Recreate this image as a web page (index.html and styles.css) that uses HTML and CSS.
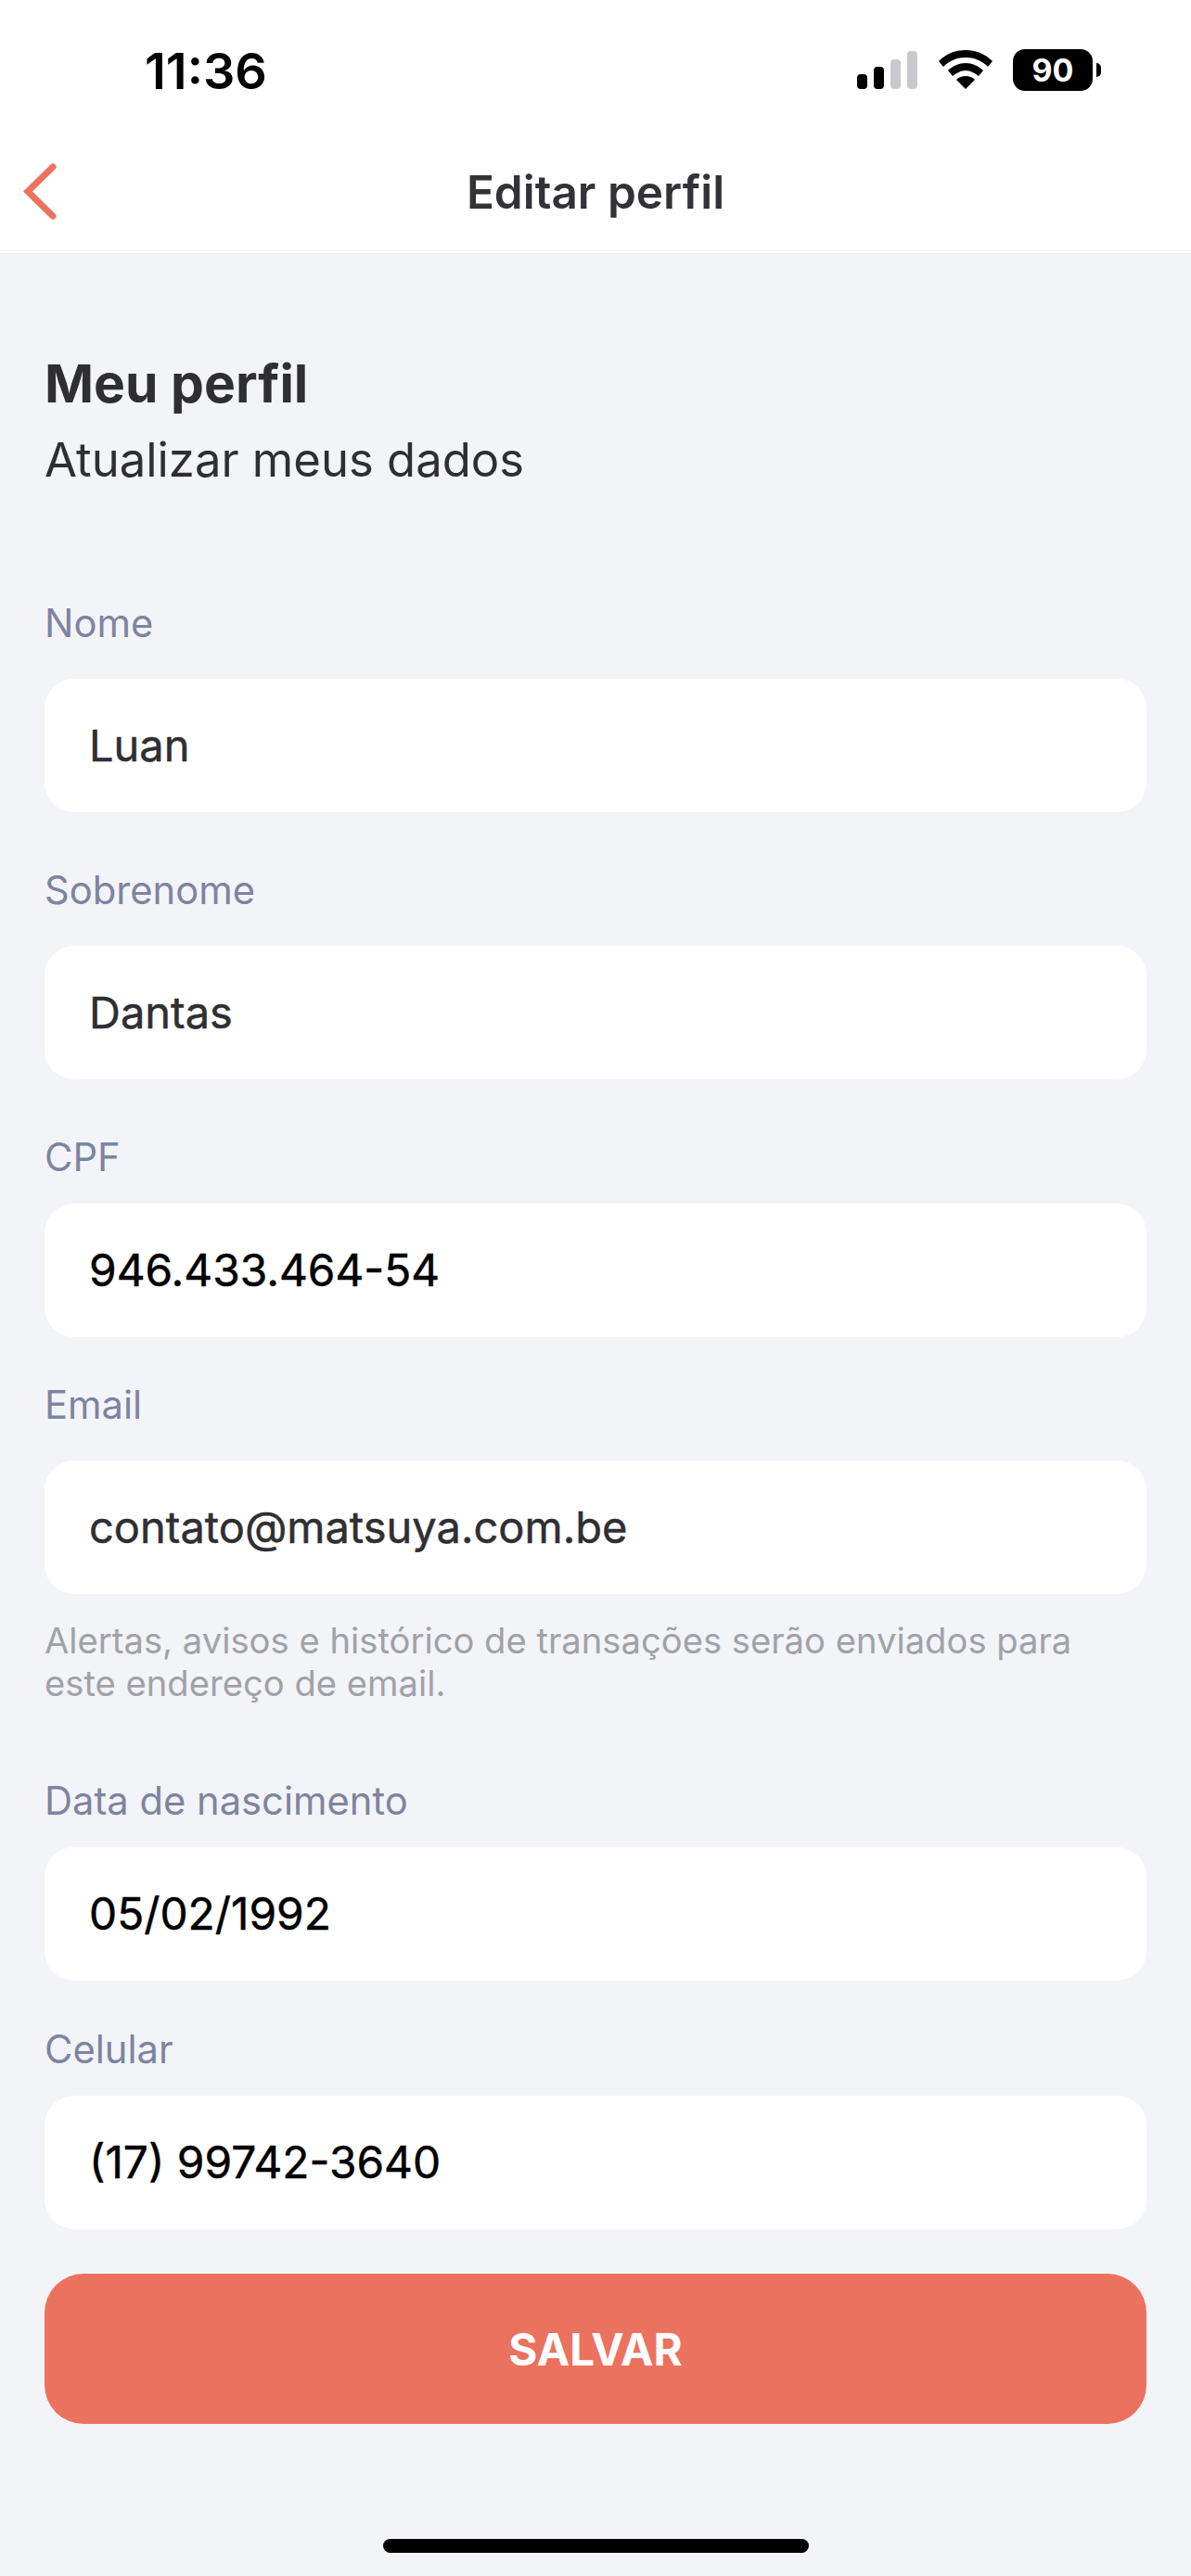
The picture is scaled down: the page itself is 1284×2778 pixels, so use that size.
FILE: index.html
```html
<!DOCTYPE html>
<html lang="pt-BR">
<head>
<meta charset="utf-8">
<title>Editar perfil</title>
<link rel="stylesheet" href="styles.css">
</head>
<body>
<header class="top">
  <div class="status">
    <span class="time">11:36</span>
    <div class="status-icons">
      <svg class="signal" width="66" height="42" viewBox="0 0 66 42">
        <rect x="0" y="25" width="11" height="16" rx="4" fill="#000"/>
        <rect x="18" y="17" width="11" height="24" rx="4" fill="#000"/>
        <rect x="36" y="9" width="11" height="32" rx="4" fill="#c9c8cd"/>
        <rect x="54" y="0" width="11" height="41" rx="4" fill="#c9c8cd"/>
      </svg>
      <svg class="wifi" width="58" height="42" viewBox="0 0 58 42">
        <path d="M29 0C18 0 8 4 0 12l5 6C12 11 20 8 29 8s17 3 24 10l5-6C50 4 40 0 29 0z" fill="#000"/>
        <path d="M29 14c-7 0-14 3-19 8l5 6c4-3 9-6 14-6s10 3 14 6l5-6c-5-5-12-8-19-8z" fill="#000"/>
        <path d="M29 28c-4 0-7 1-10 4l10 10 10-10c-3-3-6-4-10-4z" fill="#000"/>
      </svg>
      <div class="battery"><span class="battery-body">90</span><span class="battery-cap"></span></div>
    </div>
  </div>
  <div class="nav">
    <svg class="back" width="40" height="64" viewBox="0 0 40 64">
      <path d="M33 6 L6 32.5 L33 59" fill="none" stroke="#ec7260" stroke-width="7" stroke-linecap="round" stroke-linejoin="miter"/>
    </svg>
    <h1 class="nav-title">Editar perfil</h1>
  </div>
</header>
<main class="content">
  <h2 class="heading">Meu perfil</h2>
  <p class="subheading">Atualizar meus dados</p>
  <form class="form">
    <div class="field field-nome">
      <label class="label">Nome</label>
      <div class="input">Luan</div>
    </div>
    <div class="field field-sobrenome">
      <label class="label">Sobrenome</label>
      <div class="input">Dantas</div>
    </div>
    <div class="field field-cpf">
      <label class="label label-close">CPF</label>
      <div class="input input-filled">946.433.464-54</div>
    </div>
    <div class="field field-email">
      <label class="label">Email</label>
      <div class="input">contato@matsuya.com.be</div>
      <p class="hint">Alertas, avisos e histórico de transações serão enviados para este endereço de email.</p>
    </div>
    <div class="field field-data">
      <label class="label label-close">Data de nascimento</label>
      <div class="input input-filled">05/02/1992</div>
    </div>
    <div class="field field-celular">
      <label class="label label-close">Celular</label>
      <div class="input input-filled">(17) 99742-3640</div>
    </div>
    <button class="save" type="button">SALVAR</button>
  </form>
  <div class="home-bar"></div>
</main>
</body>
</html>
```
FILE: styles.css
```css
* { box-sizing: border-box; }
html, body { margin: 0; padding: 0; }
body {
  width: 1284px;
  height: 2778px;
  background: linear-gradient(#f2f4f6 274px, #f3f4f8 800px);
  font-family: Inter, "Noto Sans", sans-serif;
  color: #2f2f33;
  overflow: hidden;
}
.top {
  height: 274px;
  background: #fff;
  border-bottom: 1px solid #e9eaed;
}
.status {
  height: 130px;
  display: flex;
  justify-content: space-between;
  align-items: flex-start;
  padding: 48px 97px 0 156px;
}
.time {
  font-size: 54px;
  line-height: 54px;
  font-weight: 600;
  color: #000;
  position: relative;
  top: 2px;
}
.status-icons {
  display: flex;
  align-items: flex-start;
  gap: 22px;
  padding-top: 5px;
}
.signal { margin-top: 2px; }
.wifi { margin-top: 1px; }
.battery {
  display: flex;
  align-items: center;
  gap: 4px;
}
.battery-body {
  width: 86px;
  height: 45px;
  background: #000;
  border-radius: 13px;
  color: #fff;
  font-size: 34px;
  line-height: 45px;
  font-weight: 700;
  text-align: center;
}
.battery-cap {
  width: 5px;
  height: 15px;
  background: #000;
  border-radius: 0 8px 8px 0;
}
.nav {
  height: 143px;
  position: relative;
  display: flex;
  align-items: center;
  justify-content: center;
}
.back {
  position: absolute;
  left: 24px;
  top: 44px;
}
.nav-title {
  margin: 0;
  font-size: 49.5px;
  line-height: 60px;
  font-weight: 600;
  color: #333337;
  position: relative;
  top: 5px;
}
.content { padding: 0 48px; }
.heading {
  margin: 106px 0 0;
  font-size: 57px;
  line-height: 68px;
  font-weight: 700;
  color: #2f2f33;
}
.subheading {
  margin: 18px 0 0;
  font-size: 50.8px;
  line-height: 60px;
  font-weight: 400;
  color: #2f2f33;
}
.form { display: flex; flex-direction: column; }
.field { display: flex; flex-direction: column; }
.field-nome { margin-top: 121px; }
.field-sobrenome { margin-top: 59px; }
.field-cpf { margin-top: 59px; }
.field-email { margin-top: 48px; }
.field-data { margin-top: 79px; }
.field-celular { margin-top: 49px; }
.label {
  font-size: 41.7px;
  line-height: 50px;
  color: #7d84a0;
  margin-bottom: 35px;
}
.label-close { margin-bottom: 25px; }
.input {
  height: 144px;
  background: #fff;
  border-radius: 32px;
  padding-left: 48px;
  font-size: 47px;
  font-weight: 400;
  -webkit-text-stroke: 0.5px currentColor;
  line-height: 144px;
  color: #2f2f33;
}
.input-filled { font-size: 47.8px; color: #000; }
.hint {
  margin: 27px 0 0;
  font-size: 38.2px;
  line-height: 46px;
  color: #a0a2a8;
}
.save {
  margin-top: 48px;
  height: 162px;
  border: 0;
  border-radius: 42px;
  background: #ec7260;
  color: #fff;
  font-family: inherit;
  font-size: 47.5px;
  font-weight: 700;
  padding: 0;
}
.home-bar {
  width: 459px;
  height: 15px;
  margin: 124px auto 0;
  background: #000;
  border-radius: 8px;
}
```
